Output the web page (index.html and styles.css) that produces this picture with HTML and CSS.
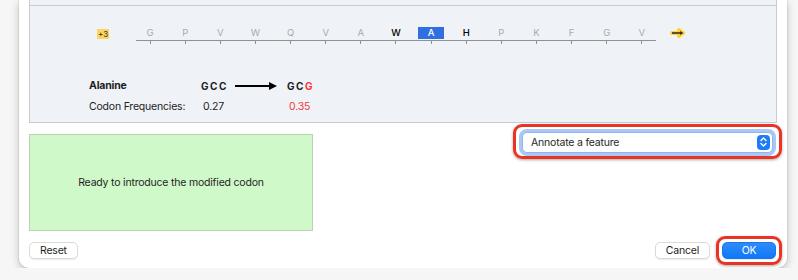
FILE: index.html
```html
<!DOCTYPE html>
<html lang="en">
<head>
  <meta charset="UTF-8">
  <title>Change Codon</title>
  <link rel="stylesheet" href="styles.css">
</head>
<body>

  <div class="window">
    <div class="panel">
      <div class="panel-strip"></div>

      <div class="track">
        <div class="frame-badge">+3</div>
        <div class="ruler">
          <div class="cells">
            <span class="cell">G</span>
            <span class="cell">P</span>
            <span class="cell">V</span>
            <span class="cell">W</span>
            <span class="cell">Q</span>
            <span class="cell">V</span>
            <span class="cell">A</span>
            <span class="cell near">W</span>
            <span class="cell current"><b>A</b></span>
            <span class="cell near">H</span>
            <span class="cell">P</span>
            <span class="cell">K</span>
            <span class="cell">F</span>
            <span class="cell">G</span>
            <span class="cell">V</span>
          </div>
          <div class="axis"></div>
          <div class="ticks">
            <i></i><i></i><i></i><i></i><i></i><i></i><i></i><i></i><i></i><i></i><i></i><i></i><i></i><i></i><i></i>
          </div>
        </div>
        <svg class="next-arrow" width="16" height="10" viewBox="0 0 16 10">
          <path d="M2 5 H12 M9 2 L13 5 L9 8" fill="none" stroke="#ffd23c" stroke-width="4" stroke-linecap="round" stroke-linejoin="round"/>
          <path d="M2 5 H12" stroke="#3a3320" stroke-width="1.6"/>
          <path d="M10 3 L13.5 5 L10 7 Z" fill="#3a3320"/>
        </svg>
      </div>

      <div class="codon-info">
        <div class="amino">Alanine</div>
        <div class="codon">GCC
          <svg class="change-arrow" width="43" height="8" viewBox="0 0 43 8">
            <path d="M0 4 H35" stroke="#000" stroke-width="2"/>
            <path d="M34 0 L42 4 L34 8 Z" fill="#000"/>
          </svg>
        </div>
        <div class="codon">GC<span class="changed">G</span></div>
        <div>Codon Frequencies:</div>
        <div class="freq">0.27</div>
        <div class="freq changed">0.35</div>
      </div>
    </div>

    <div class="middle-row">
      <div class="status-box">Ready to introduce the modified codon</div>
      <div class="callout select-callout">
        <div class="popup">
          <span>Annotate a feature</span>
          <span class="stepper">
            <svg width="13" height="14" viewBox="0 0 13 14">
              <path d="M4 5.5 L6.5 3 L9 5.5 M4 8.5 L6.5 11 L9 8.5" fill="none" stroke="#fff" stroke-width="1.4" stroke-linecap="round" stroke-linejoin="round"/>
            </svg>
          </span>
        </div>
      </div>
    </div>

    <div class="button-row">
      <button class="btn">Reset</button>
      <div class="right-buttons">
        <button class="btn">Cancel</button>
        <div class="callout ok-callout">
          <button class="btn primary">OK</button>
        </div>
      </div>
    </div>
  </div>

</body>
</html>
```

FILE: styles.css
```css
* {
  box-sizing: border-box;
}

body {
  margin: 0;
  background: #f6f6f6;
  font-family: 'Inter', 'Liberation Sans', sans-serif;
  font-size: 10.5px;
  letter-spacing: -0.2px;
  color: #1d1d1d;
}

.window {
  margin-left: 19px;
  width: 768px;
  padding: 0 10px 3px;
  background: #ffffff;
  border-radius: 0 0 10px 10px;
  box-shadow: 0 3px 8px rgba(0,0,0,0.22), 0 0 0 1px rgba(0,0,0,0.06);
}

.panel {
  height: 123px;
  background: #eff2f7;
  border: 1px solid #c9cbcf;
  border-top: none;
}

.panel-strip {
  height: 6px;
  border-bottom: 1px solid #c9cbcf;
}

.track {
  display: flex;
  align-items: flex-start;
  margin-top: 21px;
}

.frame-badge {
  margin: 2px 0 0 67px;
  width: 12px;
  height: 10px;
  background: #fdd462;
  font-size: 8px;
  letter-spacing: 0;
  line-height: 10px;
  text-align: center;
  color: #3b3418;
}

.ruler {
  margin-left: 23.5px;
  width: 527px;
}

.cells,
.ticks {
  display: flex;
}

.cell {
  width: 35.13px;
  height: 12px;
  line-height: 12px;
  text-align: center;
  font-size: 9.5px;
  letter-spacing: 0;
  color: #a9abae;
}

.cell.near {
  color: #000;
  font-weight: 500;
}

.cell.current b {
  display: inline-block;
  width: 26px;
  background: #2f6fe0;
  color: #fff;
  font-weight: 500;
}

.axis {
  height: 1px;
  margin: 1px 3.5px 0;
  background: #8f9194;
}

.ticks i {
  width: 35.13px;
  height: 3px;
  display: flex;
  justify-content: center;
}

.ticks i::before {
  content: "";
  width: 1px;
  background: #8f9194;
}

.next-arrow {
  margin: 1px 0 0 10px;
}

.codon-info {
  display: grid;
  grid-template-columns: 112px 86px auto;
  row-gap: 7px;
  margin: 35px 0 0 59px;
  line-height: 14px;
}

.amino {
  font-weight: 700;
}

.codon {
  display: flex;
  align-items: center;
  font-weight: 700;
  font-size: 10px;
  letter-spacing: 1.6px;
}

.change-arrow {
  margin-left: 7px;
}

.freq {
  padding-left: 2px;
}

.changed {
  color: #f23a3a;
}

.middle-row {
  display: flex;
  justify-content: space-between;
  align-items: flex-start;
  margin: 1px -5px 0 0;
}

.status-box {
  margin-top: 10px;
  width: 284px;
  height: 97px;
  background: #d0f9c9;
  border: 1px solid #b8d2b3;
  display: flex;
  align-items: center;
  justify-content: center;
  color: #1f1f1f;
}

.callout {
  border: 3px solid #ea3323;
  border-radius: 9px;
  box-shadow: 0 1px 3px rgba(0,0,0,0.35);
}

.select-callout {
  width: 269px;
  padding: 5px 6px 3px;
}

.popup {
  display: flex;
  align-items: center;
  justify-content: space-between;
  height: 21px;
  padding: 0 2px 0 8px;
  background: #fff;
  border: 1px solid #8fb6ef;
  border-radius: 5px;
  box-shadow: 0 0 0 3px #a9c8f5;
  color: #262626;
}

.stepper {
  display: flex;
  width: 13px;
  height: 15px;
  background: #1f7cf6;
  border-radius: 4px;
}

.button-row {
  display: flex;
  justify-content: space-between;
  align-items: center;
  margin: 5px -5px 0 0;
}

.right-buttons {
  display: flex;
  align-items: center;
  gap: 6px;
}

.btn {
  height: 17px;
  padding: 0 10px;
  font-family: inherit;
  font-size: 10.5px;
  letter-spacing: -0.2px;
  color: #1d1d1d;
  background: #fff;
  border: 1px solid #dadada;
  border-radius: 5px;
  box-shadow: 0 1px 1px rgba(0,0,0,0.08);
}

.ok-callout {
  padding: 3px;
}

.btn.primary {
  width: 54px;
  color: #fff;
  border-color: #1577f0;
  background: linear-gradient(#2d8cfc, #1178f6);
}
```
